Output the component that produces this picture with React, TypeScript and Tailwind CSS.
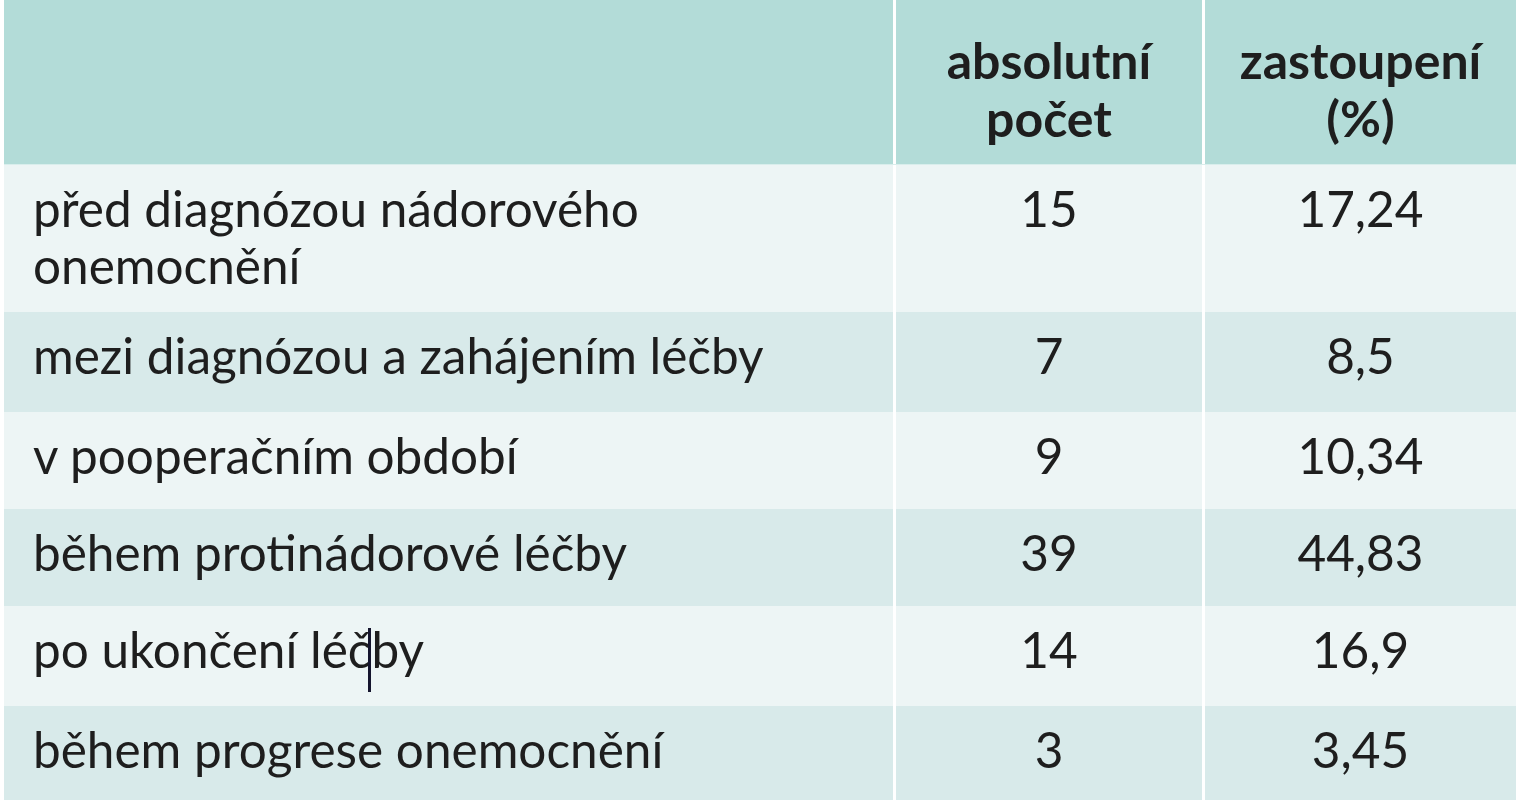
import React from "react";

const rows: { label: React.ReactNode; n: string; p: string; h: string; dark: boolean }[] = [
  { label: <>před diagnózou nádorového<br />onemocnění</>, n: "15", p: "17,24", h: "h-[147px]", dark: false },
  { label: "mezi diagnózou a zahájením léčby", n: "7", p: "8,5", h: "h-[100px]", dark: true },
  { label: "v pooperačním období", n: "9", p: "10,34", h: "h-[97px]", dark: false },
  { label: "během protinádorové léčby", n: "39", p: "44,83", h: "h-[97px]", dark: true },
  {
    label: (
      <>
        po ukončení léč
        <span className="relative inline-block w-0">
          <span className="absolute left-[-3px] top-[-40px] w-[3px] h-[64px] bg-[#15152e]" />
        </span>
        by
      </>
    ),
    n: "14",
    p: "16,9",
    h: "h-[100px]",
    dark: false,
  },
  { label: "během progrese onemocnění", n: "3", p: "3,45", h: "h-[98px]", dark: true },
];

export default function App() {
  return (
    <div
      className="w-[1523px] h-[800px] bg-white overflow-hidden pl-[4px] text-[#1e1e1e]"
      style={{ fontFamily: "Lato, 'Open Sans', sans-serif" }}
    >
      <div className="flex w-fit gap-[3px] h-[165px] border-b border-[#d9eeec]">
        <div className="w-[889px] bg-[#b3dcd8]" />
        <div className="w-[306px] bg-[#b3dcd8] pt-[31px] text-center font-bold text-[50px] leading-[58px]">
          absolutní
          <br />
          počet
        </div>
        <div className="w-[311px] bg-[#b3dcd8] pt-[31px] text-center font-bold text-[50px] leading-[58px]">
          zastoupení
          <br />
          (%)
        </div>
      </div>
      {rows.map((r, i) => {
        const bg = r.dark ? "bg-[#d8eaea]" : "bg-[#edf5f5]";
        return (
          <div key={i} className={`flex w-fit gap-[3px] ${r.h} text-[49.5px] leading-[57px]`}>
            <div className={`w-[889px] ${bg} pl-[29px] pt-[15px]`}>{r.label}</div>
            <div className={`w-[306px] ${bg} pt-[15px] text-center`}>{r.n}</div>
            <div className={`w-[311px] ${bg} pt-[15px] text-center`}>{r.p}</div>
          </div>
        );
      })}
    </div>
  );
}
